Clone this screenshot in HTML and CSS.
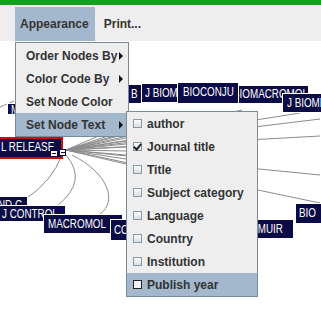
FILE: index.html
```html
<!doctype html>
<html lang="en">
<head>
	<meta charset="UTF-8">
	<title>Appearance menu</title>
	<link rel="stylesheet" href="styles.css">
</head>
<body>
	<div class="app">
		<div class="titlebar"></div>
		<div class="menubar">
			<span class="mitem active">Appearance</span>
			<span class="mitem">Print...</span>
		</div>
		<div class="canvas">
			<svg class="edges" width="321" height="275" viewBox="0 0 321 275">
				<g fill="none" stroke="#8c8c8c" stroke-width="1">
					<!-- fan to the right -->
					<path d="M66 109 L320 78"/>
					<path d="M66 109 L320 95"/>
					<path d="M66 109 L320 134"/>
					<path d="M66 109 L320 162"/>
					<path d="M66 109 L300 72"/>
					<path d="M66 109 L152 72"/>
					<path d="M66 109 L194 72"/>
					<path d="M66 109 L242 69"/>
					<path d="M66 109 L126 89"/>
					<path d="M66 109 L126 93"/>
					<path d="M66 109 L126 97"/>
					<path d="M66 109 L126 100"/>
					<path d="M66 109 L126 103"/>
					<path d="M66 109 L126 106"/>
					<path d="M66 109 L126 110"/>
					<path d="M66 109 L126 114"/>
					<path d="M66 109 L126 118"/>
					<path d="M66 109 L126 123"/>
					<!-- curves down to the left -->
					<path d="M62 114 Q52 140 27 157"/>
					<path d="M66 114 Q88 140 58 164"/>
					<path d="M72 114 C108 132 118 160 100 173"/>
					<path d="M0 66 L14 60"/>
				</g>
			</svg>
			<div class="node n-m"><span>M</span></div>
			<div class="node n-b"><span>B</span></div>
			<div class="node n-jb1"><span>J BIOMED</span></div>
			<div class="node n-bm"><span>BIOMACROMOL</span></div>
			<div class="node n-bc"><span>BIOCONJU</span></div>
			<div class="node n-jb2"><span>J BIOMED</span></div>
			<div class="node n-rel"><span>L RELEASE</span></div>
			<i class="mini m1"></i>
			<i class="mini m2"></i>
			<div class="node n-nd"><span>ND C</span></div>
			<div class="node n-jc"><span>J CONTROL</span></div>
			<div class="node n-mac"><span>MACROMOL</span></div>
			<div class="node n-co"><span>CO</span></div>
			<div class="node n-lm"><span>LANGMUIR</span></div>
			<div class="node n-bio"><span>BIO</span></div>
		</div>

		<div class="menu drop">
			<div class="item">Order Nodes By<span class="arrow"></span></div>
			<div class="item">Color Code By<span class="arrow"></span></div>
			<div class="item">Set Node Color</div>
			<div class="item sel">Set Node Text<span class="arrow"></span></div>
		</div>

		<div class="menu sub">
			<div class="item"><span class="box"></span>author</div>
			<div class="item"><span class="box on"></span>Journal title</div>
			<div class="item"><span class="box"></span>Title</div>
			<div class="item"><span class="box"></span>Subject category</div>
			<div class="item"><span class="box"></span>Language</div>
			<div class="item"><span class="box"></span>Country</div>
			<div class="item"><span class="box"></span>Institution</div>
			<div class="item sel"><span class="box"></span>Publish year</div>
		</div>
	</div>
</body>
</html>
```
FILE: styles.css
```css
body { margin:0; background:#fff; font-family:"Liberation Sans", Arial, sans-serif; }
.app { position:relative; width:321px; height:316px; overflow:hidden; }
.titlebar { height:5px; background:#14a01e; }
.menubar { height:36px; background:#eeeeee; display:flex; padding-left:15px; box-sizing:border-box; }
.mitem { margin-top:2px; height:34px; line-height:34px; padding:0 6px 0 5px; font-size:12px; font-weight:bold; color:#333; }
.mitem.active { background:#a3b8cc; }
.mitem + .mitem { margin-left:4px; }

.canvas { position:relative; height:275px; background:#fff; }
.edges { position:absolute; left:0; top:0; }
.node { position:absolute; box-sizing:border-box; background:#0b0b45; border:1px solid #fff; color:#fff; font-size:12px; white-space:nowrap; overflow:hidden; padding-left:3px; }
/* label font is a narrow sans */
.node span { display:inline-block; transform:scaleX(0.82); transform-origin:left center; }
.n-m { left:7px; top:62px; width:20px; height:12px; line-height:12px; }
.n-b { left:121px; top:43px; width:21px; height:20px; line-height:18px; padding-left:9px; }
.n-jb1 { left:141px; top:42px; width:44px; height:20px; line-height:18px; }
.n-bm { left:229px; top:44px; width:80px; height:19px; line-height:17px; }
.n-bc { left:177px; top:41px; width:62px; height:22px; line-height:19px; padding-left:5px; }
.n-jb2 { left:282px; top:52px; width:50px; height:20px; line-height:18px; padding-left:4px; }
.n-rel { left:-12px; top:96px; width:75px; height:22px; line-height:17px; border:2px solid #c81010; padding-left:11px; }
.mini { position:absolute; top:108px; width:8px; height:7px; background:#fff; border:1px solid #0b0b45; box-sizing:border-box; }
.mini::after { content:""; position:absolute; left:1px; top:2px; width:4px; height:1px; background:#0b0b45; }
.m1 { left:50px; top:109px; }
.m2 { left:59px; width:7px; }
.n-nd { left:-6px; top:155px; width:34px; height:18px; line-height:16px; }
.n-jc { left:-4px; top:164px; width:70px; height:17px; line-height:17px; padding-left:5px; }
.n-mac { left:43px; top:173px; width:80px; height:20px; line-height:18px; padding-left:4px; }
.n-co { left:110px; top:178px; width:30px; height:22px; line-height:21px; }
.n-lm { left:227px; top:178px; width:67px; height:20px; line-height:18px; }
.n-bio { left:295px; top:162px; width:40px; height:21px; line-height:19px; padding-left:3px; }

.menu { position:absolute; background:#eeeeee; border:1px solid #7a8a99; }
.drop { left:15px; top:42px; width:112px; padding-top:1px; }
.sub { left:126px; top:111px; width:130px; }
.item { display:flex; align-items:center; height:23px; font-size:12px; font-weight:bold; color:#333; padding-left:10px; }
.drop .item { padding-left:10px; }
.sub .item { padding-left:6px; }
.item.sel { background:#a3b8cc; }
.arrow { margin-left:auto; margin-right:5px; width:0; height:0; border-left:4px solid #111; border-top:4px solid transparent; border-bottom:4px solid transparent; }
.box { position:relative; width:9px; height:9px; box-sizing:border-box; border:1px solid #8a99a6; background:linear-gradient(#fdfdfd, #d8dde2); margin-right:5px; }
.sel .box { border-color:#222; background:#f2f2f2; }
.box.on::after { content:""; position:absolute; left:1px; top:-1px; width:3px; height:6px; border-right:2px solid #222; border-bottom:2px solid #222; transform:rotate(40deg); }
```
